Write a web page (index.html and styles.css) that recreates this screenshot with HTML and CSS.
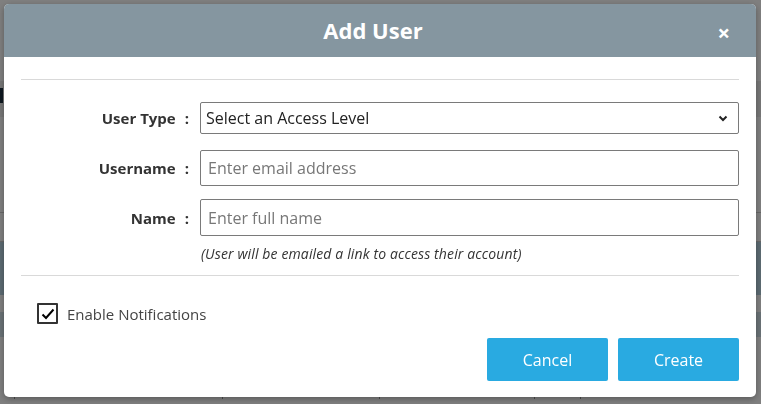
FILE: index.html
```html
<!DOCTYPE html>
<html lang="en">
<head>
  <meta charset="UTF-8">
  <meta name="viewport" content="width=device-width, initial-scale=1.0">
  <title>Users</title>
  <link rel="stylesheet" href="styles.css">
</head>
<body>
  <!-- page behind the dialog -->
  <div class="page">
    <div class="page-top"></div>
    <div class="toolbar"><span class="toolbar-icon"></span></div>
    <div class="page-gap"></div>
    <div class="page-line"></div>
    <div class="table-head"></div>
    <div class="table-band"></div>
    <div class="table-row">
      <div class="cell name">Jacob Wilson</div>
      <div class="cell type">SAML</div>
      <div class="cell date">2022-09-16 10:40</div>
      <div class="cell icon"><span class="bars"></span></div>
      <div class="cell"></div>
    </div>
  </div>

  <div class="backdrop"></div>

  <!-- add user dialog -->
  <div class="modal">
    <div class="modal-header">
      <h2 class="modal-title">Add User</h2>
      <button class="modal-close" type="button">&times;</button>
    </div>

    <div class="modal-body">
      <hr class="divider">

      <div class="form-row first">
        <label class="form-label" for="user-type">User Type<span class="colon">:</span></label>
        <div class="select-wrap">
          <select class="form-select" id="user-type">
            <option>Select an Access Level</option>
            <option>Administrator</option>
            <option>Standard User</option>
          </select>
          <svg class="select-arrow" width="10" height="7" viewBox="0 0 10 7">
            <polyline points="1.5,1.5 5,5 8.5,1.5" fill="none" stroke="#222" stroke-width="2"/>
          </svg>
        </div>
      </div>

      <div class="form-row">
        <label class="form-label" for="username">Username<span class="colon">:</span></label>
        <input class="form-input" id="username" type="text" placeholder="Enter email address">
      </div>

      <div class="form-row tight">
        <label class="form-label" for="full-name">Name<span class="colon">:</span></label>
        <input class="form-input tall" id="full-name" type="text" placeholder="Enter full name">
      </div>

      <p class="form-help">(User will be emailed a link to access their account)</p>

      <hr class="divider">

      <label class="check-row">
        <span class="check-box">
          <svg width="16" height="16" viewBox="0 0 16 16">
            <polyline points="2.5,8.5 6,12 13.5,3.5" fill="none" stroke="#000" stroke-width="2"/>
          </svg>
        </span>
        <span class="check-label">Enable Notifications</span>
      </label>

      <div class="modal-actions">
        <button class="btn" type="button">Cancel</button>
        <button class="btn" type="button">Create</button>
      </div>
    </div>
  </div>
</body>
</html>
```

FILE: styles.css
```css
:root {
  --header: #8596a0;
  --blue: #29aae1;
  --text: #333;
  --line: #d9d9d9;
  --field-border: #7a7a7a;
}

* {
  box-sizing: border-box;
  margin: 0;
  padding: 0;
}

body {
  width: 761px;
  height: 404px;
  overflow: hidden;
  background: #fff;
  font-family: 'Open Sans', 'Noto Sans', sans-serif;
  color: var(--text);
}

/* page behind */
.page {
  width: 100%;
}

.page-top {
  height: 81px;
}

.toolbar {
  height: 36px;
  background: #eeeeee;
  padding: 7px 0 0 0;
}

.toolbar-icon {
  display: block;
  width: 3px;
  height: 15px;
  background: #1d3140;
}

.page-gap {
  height: 96px;
  border-bottom: 1px solid #d0d0d0;
}

.page-line {
  height: 29px;
  border-bottom: 1px solid #d0d0d0;
}

.table-head {
  height: 53px;
  background: #b9d5e4;
}

.table-band {
  height: 42px;
  border-bottom: 25px solid #d4e4ec;
}

.table-row {
  display: flex;
  height: 40px;
  margin-top: 22px;
  margin-left: 14px;
  font-size: 16px;
  color: #000;
  line-height: 22px;
}

.cell {
  border-left: 1px solid #999;
  padding: 0 8px;
}

.cell.name { width: 208px; }
.cell.type { width: 157px; }
.cell.date { width: 155px; }
.cell.icon { width: 46px; padding-top: 8px; }

.bars {
  display: block;
  width: 15px;
  height: 12px;
  background: repeating-linear-gradient(90deg, #1c70a8 0 2px, transparent 2px 4px);
}

.backdrop {
  position: fixed;
  inset: 0;
  background: rgba(0, 0, 0, 0.5);
}

/* dialog */
.modal {
  position: fixed;
  top: 4px;
  left: 4px;
  width: 752px;
  background: #fff;
  border-radius: 5px;
  overflow: hidden;
  box-shadow: 0 2px 6px rgba(0, 0, 0, 0.3);
}

.modal-header {
  position: relative;
  height: 53px;
  background: var(--header);
  display: flex;
  align-items: center;
  justify-content: center;
}

.modal-title {
  color: #fff;
  font-size: 22px;
  font-weight: 700;
  margin: -2px 14px 0 0;
}

.modal-close {
  position: absolute;
  right: 26px;
  top: 15px;
  border: none;
  background: none;
  color: #fff;
  font-family: 'Open Sans', sans-serif;
  font-size: 22px;
  font-weight: 700;
  line-height: 26px;
}

.modal-body {
  padding: 22px 17px 16px;
}

.divider {
  border: none;
  border-top: 1px solid var(--line);
}

.form-row {
  display: grid;
  grid-template-columns: 168px 1fr;
  column-gap: 11px;
  align-items: center;
  margin-top: 16px;
}

.form-row.first {
  margin-top: 22px;
}

.form-row.tight {
  margin-top: 13px;
}

.form-label {
  text-align: right;
  font-size: 15px;
  font-weight: 700;
  color: var(--text);
}

.colon {
  margin-left: 9px;
}

.select-wrap {
  position: relative;
  display: flex;
}

.select-arrow {
  position: absolute;
  right: 11px;
  top: 13px;
  pointer-events: none;
}

.form-select,
.form-input {
  font-family: 'Open Sans', sans-serif;
  font-size: 16px;
  border: 1px solid var(--field-border);
  border-radius: 2px;
  background: #fff;
  outline: none;
}

.form-select {
  appearance: none;
  width: 100%;
  height: 32px;
  padding: 0 5px;
  color: #222;
}

.form-input {
  height: 36px;
  padding: 0 7px;
  color: #222;
}

.form-input.tall {
  height: 37px;
}

.form-input::placeholder {
  color: #777;
}

.form-help {
  margin: 9px 0 12px 180px;
  font-size: 14px;
  font-style: italic;
  letter-spacing: 0.13px;
  line-height: 18px;
  color: #333;
}

.check-row {
  display: flex;
  align-items: center;
  gap: 9px;
  margin: 27px 0 0 16px;
  font-size: 15px;
  color: #444;
}

.check-box {
  width: 21px;
  height: 21px;
  border: 2px solid #333;
  border-radius: 1px;
  display: flex;
  align-items: center;
  justify-content: center;
}

.modal-actions {
  display: flex;
  justify-content: flex-end;
  gap: 10px;
  margin-top: 14px;
}

.btn {
  width: 121px;
  height: 43px;
  border: none;
  border-radius: 2px;
  background: var(--blue);
  color: #fff;
  font-family: 'Open Sans', sans-serif;
  font-size: 16px;
}
```
